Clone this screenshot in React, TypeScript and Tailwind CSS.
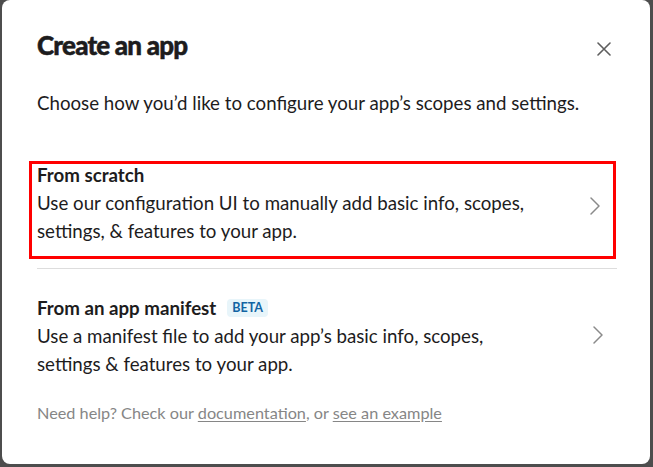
import React from "react";

function Chevron() {
  return (
    <svg width="12" height="20" viewBox="0 0 12 20" fill="none" className="shrink-0">
      <path d="M2 2l8 8-8 8" stroke="#8a8a8a" strokeWidth="1.5" strokeLinecap="round" strokeLinejoin="round" />
    </svg>
  );
}

export default function App() {
  return (
    <div
      className="w-[653px] h-[467px] bg-[#4d4d4d] overflow-hidden"
      style={{ fontFamily: "Lato, 'Noto Sans', sans-serif" }}
    >
      <div className="ml-[2px] w-[648px] h-[464px] bg-white rounded-[8px] flex flex-col pl-[35px] pr-[33px] text-[#1d1c1d]">
        <div className="flex items-center justify-between pt-[29px] h-[66px]">
          <h1 className="text-[26px] leading-[30px] font-black tracking-[-0.8px] mt-[-6px] [-webkit-text-stroke:0.5px_#1d1c1d]">Create an app</h1>
          <svg width="14" height="14" viewBox="0 0 14 14" className="mr-[6px] mt-[2px]">
            <path d="M1 1l12 12M13 1L1 13" stroke="#5e5e5e" strokeWidth="1.6" strokeLinecap="round" />
          </svg>
        </div>
        <p className="mt-[23px] text-[18.7px] leading-[28px]">
          Choose how you’d like to configure your app’s scopes and settings.
        </p>
        <div className="mt-[44px] ml-[-8px] mr-px h-[98px] border-[3px] border-[#ff0000] pl-[5px] pr-[12px] flex items-start">
          <div className="flex-1 mt-[-3px]">
            <div className="text-[18.7px] leading-[28px] font-bold">From scratch</div>
            <div className="text-[18.7px] leading-[28px]">
              Use our configuration UI to manually add basic info, scopes,
              <br />
              settings, &amp; features to your app.
            </div>
          </div>
          <div className="self-center mt-[-8px]">
            <Chevron />
          </div>
        </div>
        <div className="mt-[9px] h-px bg-[#dddddd]" />
        <div className="mt-[25px] flex items-center pr-[13px]">
          <div className="flex-1">
            <div className="flex items-center gap-[11px]">
              <span className="text-[18.7px] leading-[28px] font-bold">From an app manifest</span>
              <span className="h-[18px] px-[5px] rounded-[4px] bg-[#e8f5fa] text-[#1264a3] text-[12.5px] font-bold leading-[18px] flex items-center">
                BETA
              </span>
            </div>
            <div className="text-[18.7px] leading-[28px]">
              Use a manifest file to add your app’s basic info, scopes,
              <br />
              settings &amp; features to your app.
            </div>
          </div>
          <div className="mt-[-2px]">
            <Chevron />
          </div>
        </div>
        <p className="mt-[24px] text-[16.25px] leading-[22px] text-[#868686]">
          Need help? Check our <span className="underline underline-offset-2">documentation</span>, or{" "}
          <span className="underline underline-offset-2">see an example</span>
        </p>
      </div>
    </div>
  );
}
